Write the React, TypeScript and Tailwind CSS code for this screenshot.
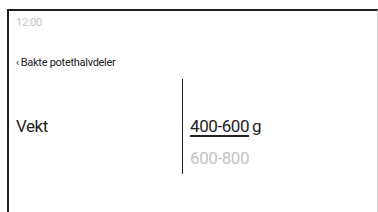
import React from 'react';

const font = { fontFamily: '"Roboto", "Liberation Sans", sans-serif' };

export default function App() {
  return (
    <div className="w-[378px] h-[212px] bg-white overflow-hidden pl-[7px] pt-[9px]" style={font}>
      <div className="h-[220px] border-t-2 border-l-2 border-[#1e1e1e] border-r border-r-[#cfcfcf]">
        {/* status bar */}
        <div className="pl-[7px] pt-[5px] text-[11px] leading-[14px] text-[#c6c6c6] tracking-tight">12:00</div>

        {/* header */}
        <div className="flex items-center pl-[7px] mt-[26px] text-[11px] leading-[14px] text-[#222] tracking-tight">
          <span className="mr-[2px] text-[10px]">‹</span>
          <span>Bakte potethalvdeler</span>
        </div>

        {/* setting row */}
        <div className="flex mt-[9px]">
          <div className="w-[173px] pl-[7px] pt-[37px] text-[17px] leading-[20px] text-[#222] tracking-tight">Vekt</div>
          <div className="w-px h-[95px] bg-[#222]" />
          <div className="pl-[7px] pt-[37px] text-[17px] leading-[20px] tracking-tight">
            <div className="text-[#222]">
              <span className="underline underline-offset-[3px] decoration-[1.5px]">400-600</span>
              <span className="ml-[3px]">g</span>
            </div>
            <div className="mt-[12px] text-[#c3c3c3]">600-800</div>
          </div>
        </div>
      </div>
    </div>
  );
}
